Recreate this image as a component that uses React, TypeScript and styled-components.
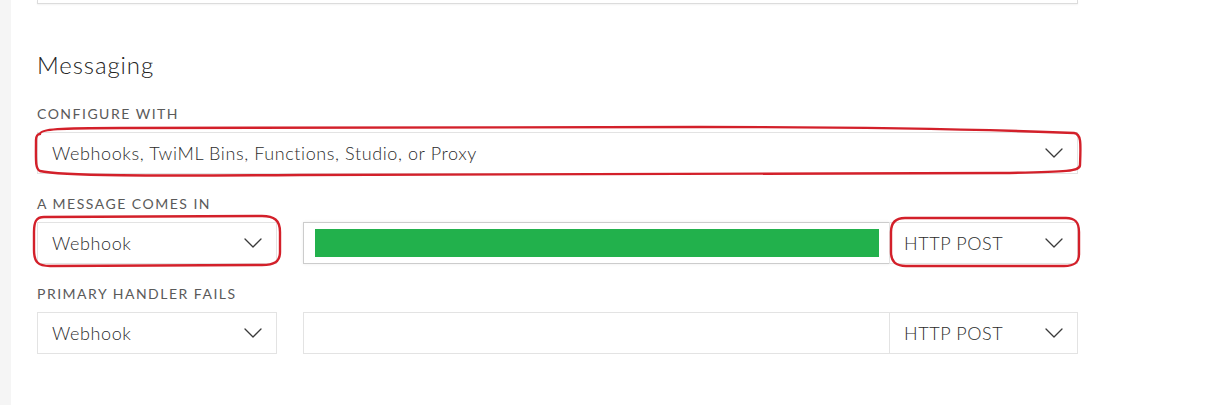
import React from 'react';
import styled, { createGlobalStyle } from 'styled-components';

const GlobalStyle = createGlobalStyle`
  html, body {
    margin: 0;
    padding: 0;
    background: #ffffff;
  }
  body {
    font-family: Lato, 'Open Sans', 'Liberation Sans', sans-serif;
    color: #333333;
  }
`;

const Chevron = () => (
  <svg width='18' height='10' viewBox='0 0 18 10' fill='none'>
    <path d='M1 1 L9 9 L17 1' stroke='#3a3a3a' strokeWidth='1.3' strokeLinecap='round' strokeLinejoin='round' />
  </svg>
);

interface SelectProps {
  value: string;
  width?: number;
  joined?: boolean;
}

const SelectBox = ({ value, width, joined }: SelectProps) => (
  <St.Select $width={width} $joined={joined}>
    <St.SelectValue>{value}</St.SelectValue>
    <Chevron />
  </St.Select>
);

// 빨간 손그림 표시
const Annotations = () => (
  <St.Overlay width='1228' height='405' viewBox='0 0 1228 405'>
    <g fill='none' stroke='#d3202a' strokeWidth='2.4' strokeLinejoin='round'>
      <path d='M40 134 C40 129, 60 128, 120 128 L700 127 C900 127, 1000 130, 1074 133 C1081 134, 1081 141, 1080 165 C1080 171, 1070 172, 1000 173 L300 175 C150 176, 60 176, 40 171 C35 169, 36 160, 36 140 C36 136, 38 134, 40 134 Z' />
      <path d='M44 217 L262 216 C274 216, 280 220, 280 232 L280 252 C280 262, 274 265, 262 265 L50 266 C38 266, 34 262, 34 250 L34 232 C34 222, 36 217, 44 217 Z' />
      <path d='M905 218 L1066 218 C1075 218, 1079 222, 1079 232 L1079 254 C1079 263, 1074 266, 1064 266 L906 266 C895 266, 891 261, 891 252 L891 232 C891 223, 895 218, 905 218 Z' />
    </g>
  </St.Overlay>
);

const App = () => {
  return (
    <>
      <GlobalStyle />
      <St.Page>
        <St.Sidebar />
        <St.Main>
          <St.Content>
            <St.TopCard />
            <St.Heading>Messaging</St.Heading>

            <St.FieldGroup>
              <St.Label>Configure with</St.Label>
              <SelectBox value='Webhooks, TwiML Bins, Functions, Studio, or Proxy' />
            </St.FieldGroup>

            <St.FieldGroup>
              <St.Label>A message comes in</St.Label>
              <St.Row>
                <SelectBox value='Webhook' width={240} />
                <St.UrlInput $active>
                  <St.Redaction />
                </St.UrlInput>
                <SelectBox value='HTTP POST' width={189} joined />
              </St.Row>
            </St.FieldGroup>

            <St.FieldGroup>
              <St.Label>Primary handler fails</St.Label>
              <St.Row>
                <SelectBox value='Webhook' width={240} />
                <St.UrlInput />
                <SelectBox value='HTTP POST' width={189} joined />
              </St.Row>
            </St.FieldGroup>
          </St.Content>
        </St.Main>
        <Annotations />
      </St.Page>
    </>
  );
};

const St = {
  Page: styled.div`
    position: relative;
    display: flex;
    width: 1228px;
    height: 405px;
    overflow: hidden;
  `,

  Sidebar: styled.div`
    width: 11px;
    flex-shrink: 0;
    background-color: #f5f5f5;
  `,

  Main: styled.div`
    flex-grow: 1;
    padding-left: 26px;
  `,

  Content: styled.div`
    width: 1041px;
  `,

  TopCard: styled.div`
    height: 3px;
    border: 1px solid #dcdcdc;
    border-top: none;
    box-shadow: 0 1px 2px rgba(0, 0, 0, 0.05);
  `,

  Heading: styled.h2`
    margin: 49px 0 30px 0;
    font-size: 24px;
    line-height: 24px;
    font-weight: 300;
    letter-spacing: 0.9px;
    color: #222222;
  `,

  FieldGroup: styled.div`
    margin-bottom: 23px;
  `,

  Label: styled.div`
    font-size: 14px;
    line-height: 14px;
    letter-spacing: 1.5px;
    text-transform: uppercase;
    color: #5a5a5a;
    margin-bottom: 11px;
  `,

  Row: styled.div`
    display: flex;
    align-items: stretch;
  `,

  Select: styled.div<{ $width?: number; $joined?: boolean }>`
    box-sizing: border-box;
    display: flex;
    align-items: center;
    justify-content: space-between;
    flex-shrink: 0;
    width: ${({ $width }) => ($width ? `${$width}px` : '100%')};
    height: 42px;
    padding: 0 14px 0 14px;
    margin-left: ${({ $joined }) => ($joined ? '-1px' : '0')};
    border: 1px solid #e3e3e3;
    background-color: #ffffff;
  `,

  SelectValue: styled.span`
    font-size: 18px;
    font-weight: 300;
    letter-spacing: 0.6px;
    color: #2c2c2c;
    white-space: nowrap;
  `,

  UrlInput: styled.div<{ $active?: boolean }>`
    box-sizing: border-box;
    flex-grow: 1;
    height: 42px;
    margin-left: 26px;
    padding: 6px 10px 6px 11px;
    border: 1px solid ${({ $active }) => ($active ? '#cccccc' : '#e3e3e3')};
    box-shadow: ${({ $active }) => ($active ? '0 0 3px rgba(0, 0, 0, 0.08)' : 'none')};
    background-color: #ffffff;
  `,

  Redaction: styled.div`
    height: 28px;
    background-color: #22b14c;
  `,

  Overlay: styled.svg`
    position: absolute;
    top: 0;
    left: 0;
    pointer-events: none;
  `,
};

export default App;
